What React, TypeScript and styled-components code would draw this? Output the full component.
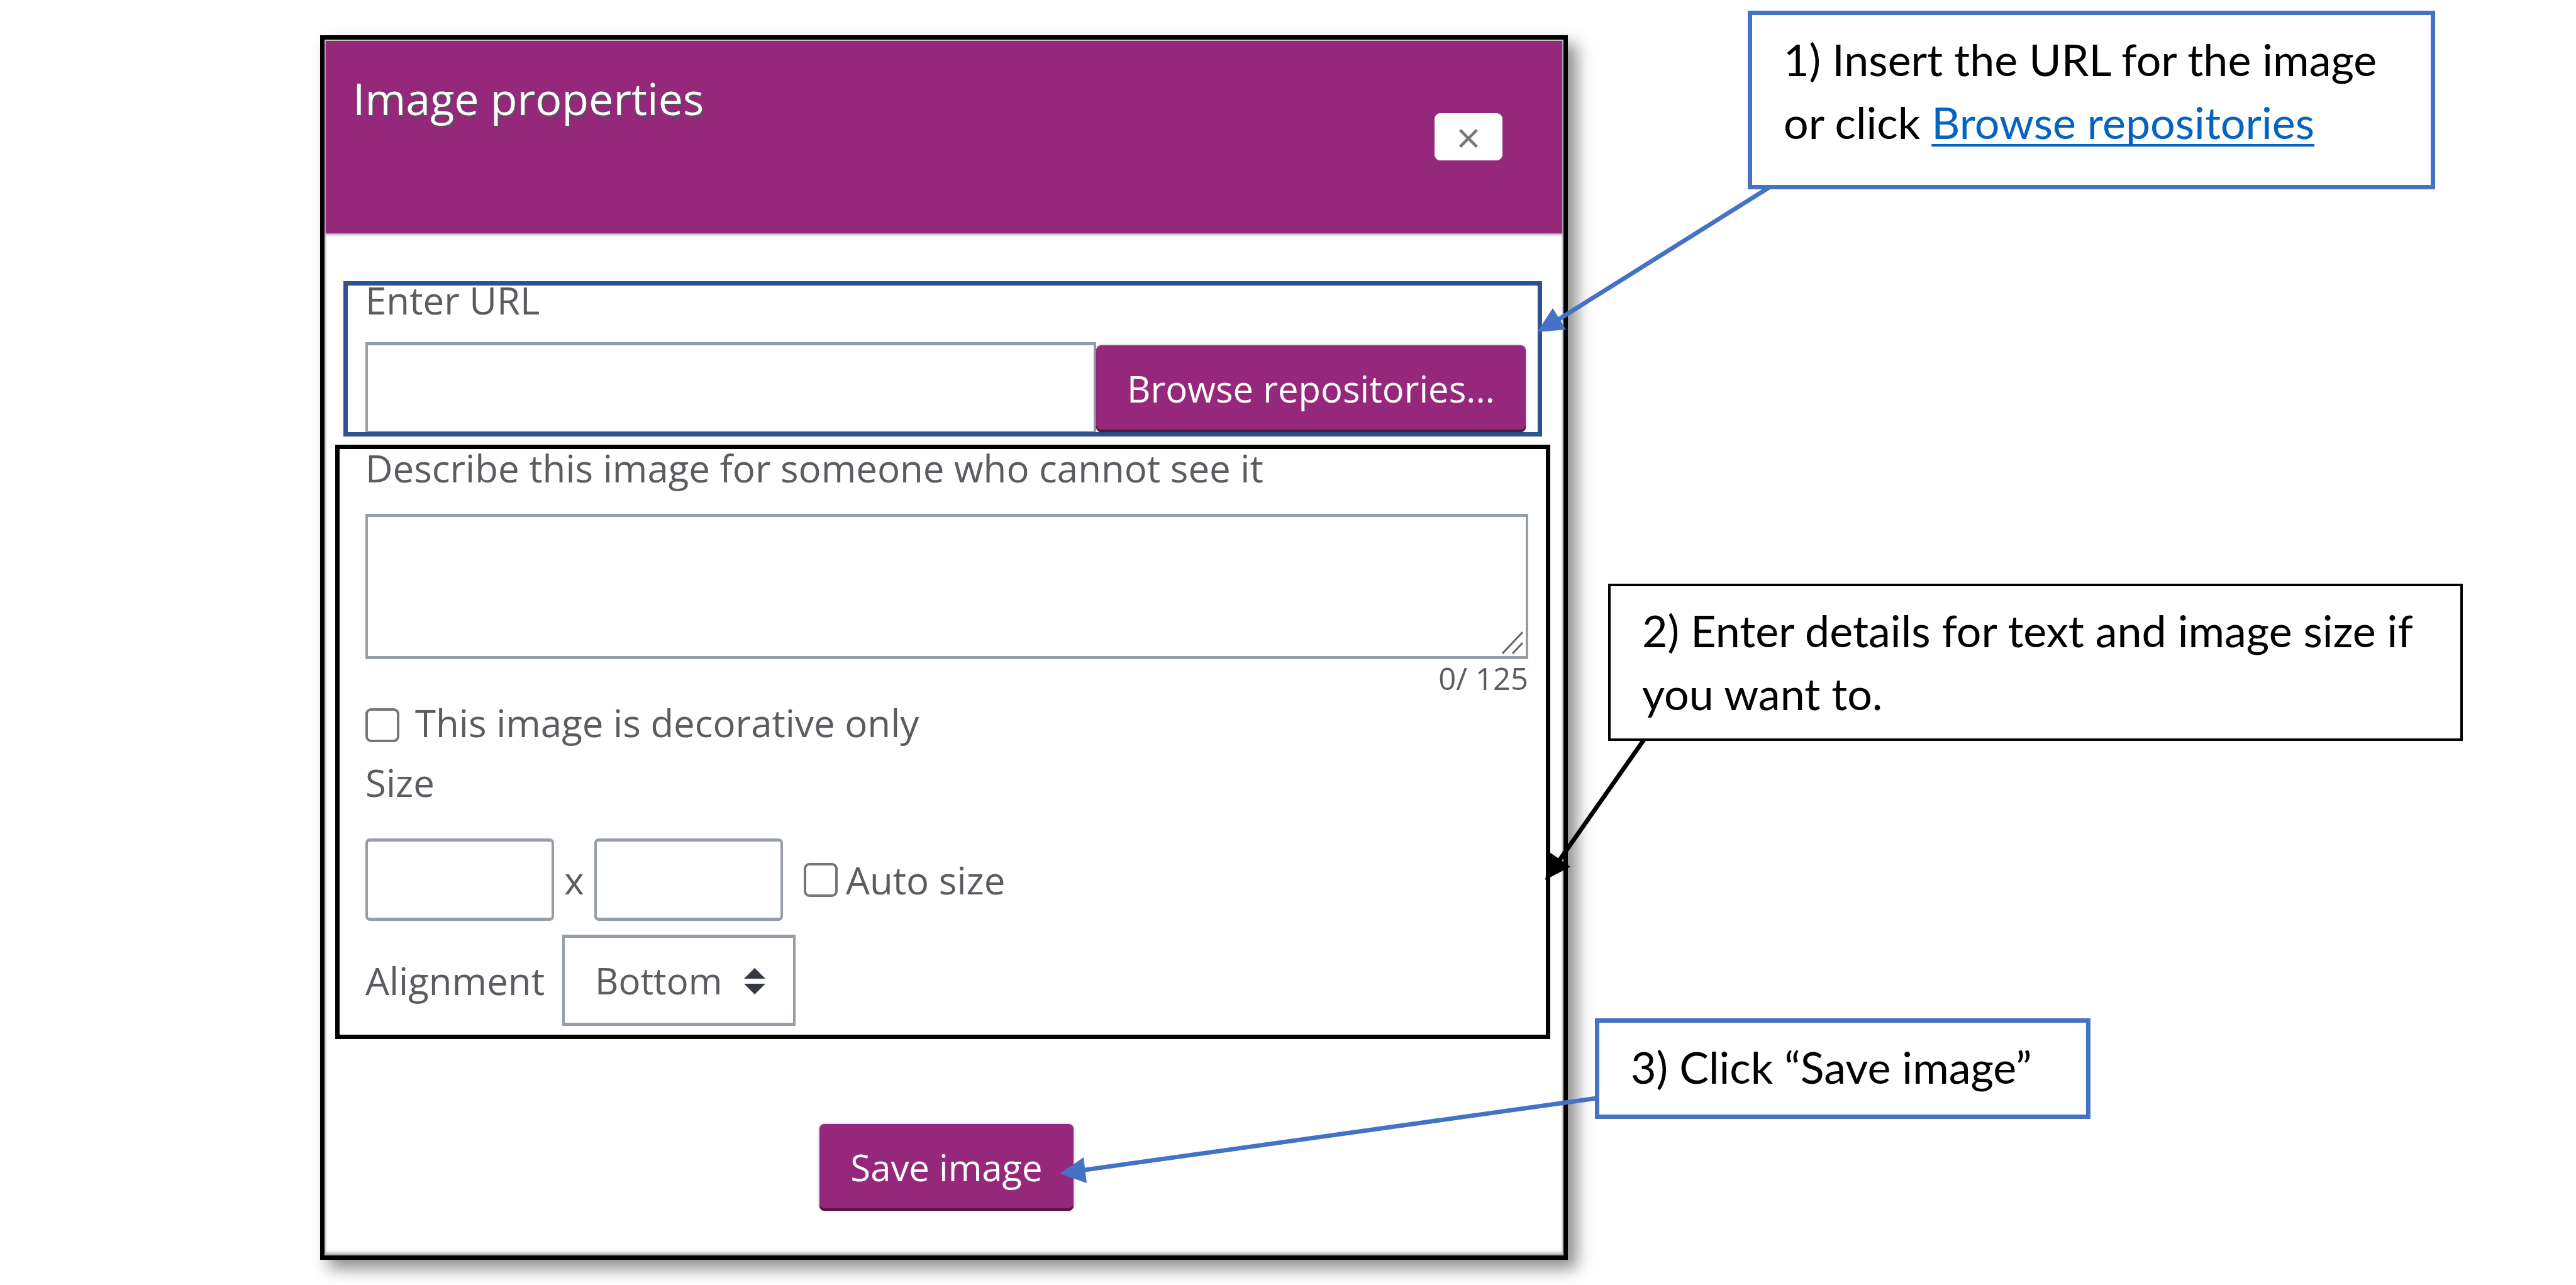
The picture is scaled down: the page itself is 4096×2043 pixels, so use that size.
import React, { useState } from "react";
import styled, { createGlobalStyle } from "styled-components";

const PLUM = "#95287a";
const FIELD_BORDER = "#979da6";
const INK = "#5a5c60";
const SANS = `"Open Sans", "Noto Sans", sans-serif`;

const GlobalStyle = createGlobalStyle`
  *, *::before, *::after { box-sizing: border-box; }
  body { margin: 0; background: #fff; }
  button, input, textarea, select { font: inherit; color: inherit; margin: 0; }
`;

const Page = styled.main`
  position: relative;
  display: grid;
  grid-template-columns: 509fr 1984fr 1603fr;
  align-items: start;
  min-height: 100vh;
  overflow: hidden;
  font-family: ${SANS};
`;

const Dialog = styled.section`
  grid-column: 2;
  margin: 56px 0 40px;
  border: 7px solid #000;
  background: #fff;
  color: ${INK};
  font-size: 60px;
  line-height: 46px;
  box-shadow: 14px 14px 24px rgba(0, 0, 0, 0.45);
`;

const Panel = styled.div`
  border: 2px solid #cbc6ca;
  border-bottom-color: #a8a8a8;
  box-shadow: inset 0 -4px 4px -1px rgba(0, 0, 0, 0.25);
`;

const Header = styled.header`
  display: flex;
  justify-content: space-between;
  align-items: flex-start;
  padding: 49px 95px 116px 43px;
  background: ${PLUM};
  box-shadow: 0 2px 4px rgba(0, 0, 0, 0.4);
`;

const Title = styled.h1`
  margin: 0;
  color: #fff;
  font-size: 70px;
  font-weight: 400;
  line-height: 84px;
  text-shadow: 2px 3px 2px #555;
`;

const CloseButton = styled.button`
  width: 108px;
  height: 75px;
  margin-top: 66px;
  padding: 0;
  border: 0;
  border-radius: 9px;
  background: #fff;
  color: #777;
  font-size: 68px;
  line-height: 75px;
`;

const Group = styled.div<{ $color: string }>`
  border: 7px solid ${(p) => p.$color};
`;

const UrlGroup = styled(Group)`
  margin: 76px 32px 0 28px;
  padding: 0 19px 0 28px;
`;

const DetailsGroup = styled(Group)`
  margin: 13px 19px 0 15px;
  padding: 7px 28px 14px 41px;
`;

const Label = styled.label`
  display: block;
`;

const UrlRow = styled.div`
  display: flex;
  align-items: flex-end;
  margin-top: 44px;
`;

const UrlInput = styled.input`
  flex: 1;
  min-width: 0;
  height: 143px;
  padding: 0 32px;
  border: solid ${FIELD_BORDER};
  border-width: 5px 4px 2px;
  background: #fff;
`;

const PrimaryButton = styled.button`
  height: 138px;
  padding: 0 49px;
  border: 0;
  border-radius: 8px;
  background: ${PLUM};
  color: #fff;
  font-size: 58px;
  white-space: nowrap;
  box-shadow: inset 0 -4px 1px #56143f, 0 0 4px rgba(0, 0, 0, 0.3);
`;

const AreaWrap = styled.div`
  position: relative;
  display: flex;
  margin-top: 50px;
`;

const Area = styled.textarea`
  flex: 1;
  height: 231px;
  padding: 16px 32px;
  border: solid ${FIELD_BORDER};
  border-width: 5px 4px;
  background: #fff;
  line-height: 72px;
  resize: none;
`;

const Grip = styled.svg`
  position: absolute;
  right: 8px;
  bottom: 8px;
  width: 34px;
  height: 36px;
  pointer-events: none;
`;

const Counter = styled.div`
  margin-top: 2px;
  font-size: 49px;
  line-height: 56px;
  text-align: right;
`;

const Check = styled.div<{ $gap: number; $align: string }>`
  display: flex;
  align-items: ${(p) => p.$align};
  gap: ${(p) => p.$gap}px;
`;

const DecorativeCheck = styled(Check)`
  margin-top: 20px;
`;

const AutoCheck = styled(Check)`
  margin-left: 33px;
`;

const Tick = styled.input`
  appearance: none;
  flex: none;
  width: 54px;
  height: 54px;
  border: 4px solid #767676;
  border-radius: 9px;
  background: #fff;
  &:checked { background: ${PLUM}; }
`;

const SizeTitle = styled.div`
  margin-top: 41px;
`;

const SizeRow = styled.div`
  display: flex;
  align-items: center;
  margin-top: 66px;
`;

const SizeInput = styled.input`
  width: 300px;
  height: 131px;
  padding: 0 24px;
  border: solid ${FIELD_BORDER};
  border-width: 5px 4px;
  border-radius: 7px;
  background: #fff;
`;

const Times = styled.span`
  width: 64px;
  text-align: center;
`;

const AlignRow = styled.div`
  display: flex;
  align-items: center;
  gap: 28px;
  margin-top: 22px;
`;

const SelectWrap = styled.div`
  position: relative;
  display: flex;
`;

const Select = styled.select`
  appearance: none;
  width: 371px;
  height: 145px;
  padding: 0 88px 0 48px;
  border: solid ${FIELD_BORDER};
  border-width: 5px 4px;
  border-radius: 0;
  background: #fff;
  font-size: 58px;
`;

const Arrows = styled.svg`
  position: absolute;
  top: 53px;
  right: 48px;
  width: 34px;
  height: 42px;
  pointer-events: none;
`;

const Footer = styled.footer`
  display: flex;
  justify-content: center;
  padding: 135px 0 69px 8px;
`;

const Notes = styled.aside`
  grid-column: 3;
  display: flex;
  flex-direction: column;
  align-items: flex-start;
  padding-top: 17px;
`;

const Note = styled.p<{ $width: number; $indent: number; $color: string; $line: number }>`
  width: ${(p) => p.$width}px;
  max-width: 100%;
  margin: 0 0 0 ${(p) => p.$indent}px;
  padding: 20px 16px 0 50px;
  border: ${(p) => p.$line}px solid ${(p) => p.$color};
  background: #fff;
  color: #000;
  font-family: Lato, "Open Sans", sans-serif;
  font-size: 70px;
  line-height: 100px;
`;

const FirstNote = styled(Note)`
  padding-bottom: 50px;
`;

const SecondNote = styled(Note)`
  margin-top: 627px;
  padding-bottom: 22px;
`;

const ThirdNote = styled(Note)`
  margin-top: 441px;
  padding-bottom: 26px;
`;

const NoteLink = styled.a`
  color: #0563c1;
  text-decoration-thickness: 4px;
  text-underline-offset: 8px;
  text-decoration-skip-ink: none;
`;

const Pointers = styled.svg`
  position: absolute;
  inset: 0;
  width: 100%;
  height: 100%;
  pointer-events: none;
`;

export default function App() {
  const [description, setDescription] = useState("");
  return (
    <>
      <GlobalStyle />
      <Page>
        <Dialog aria-labelledby="dialog-title">
          <Panel>
            <Header>
              <Title id="dialog-title">Image properties</Title>
              <CloseButton type="button" aria-label="Close">×</CloseButton>
            </Header>
            <UrlGroup $color="#2f528f">
              <Label htmlFor="url">Enter URL</Label>
              <UrlRow>
                <UrlInput id="url" type="text" />
                <PrimaryButton type="button">Browse repositories...</PrimaryButton>
              </UrlRow>
            </UrlGroup>
            <DetailsGroup $color="#000">
              <Label htmlFor="description">Describe this image for someone who cannot see it</Label>
              <AreaWrap>
                <Area
                  id="description"
                  maxLength={125}
                  value={description}
                  onChange={(e) => setDescription(e.target.value)}
                />
                <Grip viewBox="0 0 34 36" fill="none" stroke="#666" strokeWidth="3" aria-hidden="true">
                  <path d="M1 35 33 1M17 35 33 18" />
                </Grip>
              </AreaWrap>
              <Counter>{description.length}/ 125</Counter>
              <DecorativeCheck $gap={25} $align="flex-start">
                <Tick id="decorative" type="checkbox" />
                <Label htmlFor="decorative">This image is decorative only</Label>
              </DecorativeCheck>
              <SizeTitle>Size</SizeTitle>
              <SizeRow>
                <SizeInput type="text" aria-label="Width" />
                <Times>x</Times>
                <SizeInput type="text" aria-label="Height" />
                <AutoCheck $gap={13} $align="center">
                  <Tick id="auto" type="checkbox" />
                  <Label htmlFor="auto">Auto size</Label>
                </AutoCheck>
              </SizeRow>
              <AlignRow>
                <Label htmlFor="alignment">Alignment</Label>
                <SelectWrap>
                  <Select id="alignment" defaultValue="Bottom">
                    <option>Bottom</option>
                  </Select>
                  <Arrows viewBox="0 0 34 42" fill="#343a40" aria-hidden="true">
                    <path d="M17 0 34 17H0ZM17 42 0 25H34Z" />
                  </Arrows>
                </SelectWrap>
              </AlignRow>
            </DetailsGroup>
            <Footer>
              <PrimaryButton type="button">Save image</PrimaryButton>
            </Footer>
          </Panel>
        </Dialog>
        <Notes>
          <FirstNote $width={1093} $indent={286} $color="#4472c4" $line={7}>
            1) Insert the URL for the image
            <br />
            or click <NoteLink href="#url">Browse repositories</NoteLink>
          </FirstNote>
          <SecondNote $width={1359} $indent={64} $color="#000" $line={4}>
            2) Enter details for text and image size if
            <br />
            you want to.
          </SecondNote>
          <ThirdNote $width={788} $indent={43} $color="#4472c4" $line={7}>
            3) Click “Save image”
          </ThirdNote>
        </Notes>
        <Pointers viewBox="0 0 4096 2043" preserveAspectRatio="none" aria-hidden="true">
          <g fill="#4472c4" stroke="none">
            <path d="M2813 298 2478 508" stroke="#4472c4" strokeWidth="7" />
            <path d="M2444 528 2469 490 2490 524Z" />
            <path d="M2539 1746 1725 1860" stroke="#4472c4" strokeWidth="7" />
            <path d="M1685 1866 1723 1840 1728 1881Z" />
          </g>
          <path d="M2614 1176 2480 1367" stroke="#000" strokeWidth="7" />
          <path d="M2457 1399 2464 1355 2497 1378Z" fill="#000" />
        </Pointers>
      </Page>
    </>
  );
}
